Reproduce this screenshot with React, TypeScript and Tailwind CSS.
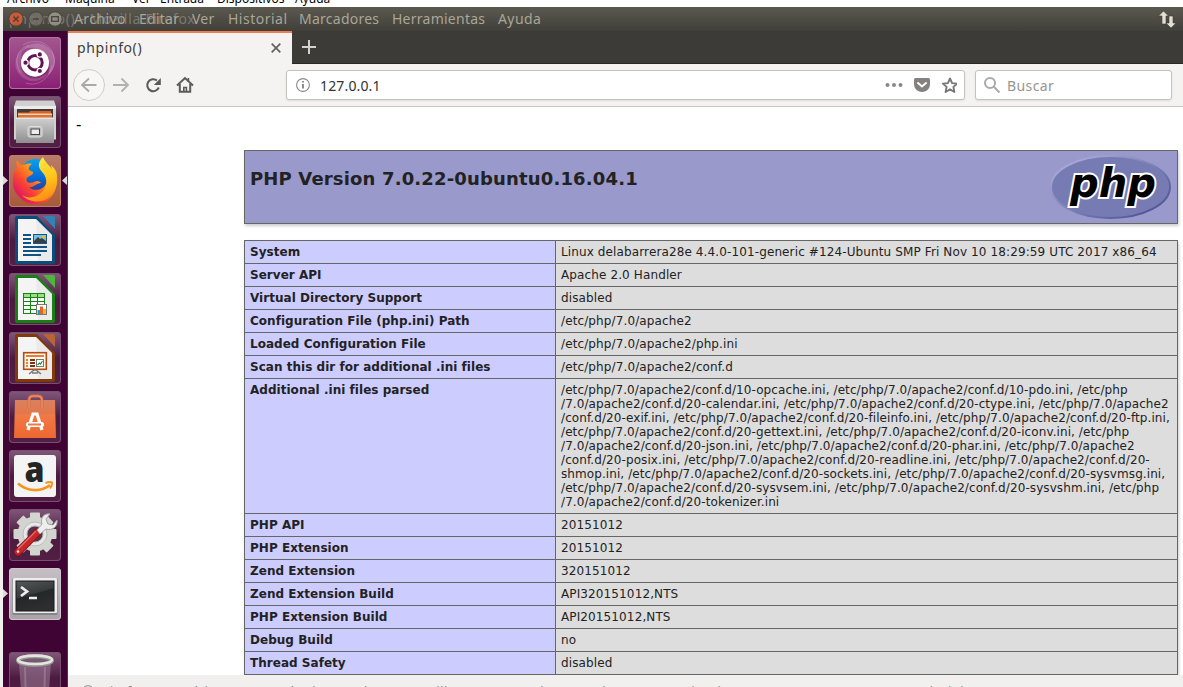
import React from "react";

const uiFont = "font-['Noto_Sans',sans-serif]";

const infoRows: [string, string][] = [
  ["System", "Linux delabarrera28e 4.4.0-101-generic #124-Ubuntu SMP Fri Nov 10 18:29:59 UTC 2017 x86_64"],
  ["Server API", "Apache 2.0 Handler"],
  ["Virtual Directory Support", "disabled"],
  ["Configuration File (php.ini) Path", "/etc/php/7.0/apache2"],
  ["Loaded Configuration File", "/etc/php/7.0/apache2/php.ini"],
  ["Scan this dir for additional .ini files", "/etc/php/7.0/apache2/conf.d"],
  [
    "Additional .ini files parsed",
    `/etc/php/7.0/apache2/conf.d/10-opcache.ini, /etc/php/7.0/apache2/conf.d/10-pdo.ini, /etc/php
/7.0/apache2/conf.d/20-calendar.ini, /etc/php/7.0/apache2/conf.d/20-ctype.ini, /etc/php/7.0/apache2
/conf.d/20-exif.ini, /etc/php/7.0/apache2/conf.d/20-fileinfo.ini, /etc/php/7.0/apache2/conf.d/20-ftp.ini,
/etc/php/7.0/apache2/conf.d/20-gettext.ini, /etc/php/7.0/apache2/conf.d/20-iconv.ini, /etc/php
/7.0/apache2/conf.d/20-json.ini, /etc/php/7.0/apache2/conf.d/20-phar.ini, /etc/php/7.0/apache2
/conf.d/20-posix.ini, /etc/php/7.0/apache2/conf.d/20-readline.ini, /etc/php/7.0/apache2/conf.d/20-
shmop.ini, /etc/php/7.0/apache2/conf.d/20-sockets.ini, /etc/php/7.0/apache2/conf.d/20-sysvmsg.ini,
/etc/php/7.0/apache2/conf.d/20-sysvsem.ini, /etc/php/7.0/apache2/conf.d/20-sysvshm.ini, /etc/php
/7.0/apache2/conf.d/20-tokenizer.ini`,
  ],
  ["PHP API", "20151012"],
  ["PHP Extension", "20151012"],
  ["Zend Extension", "320151012"],
  ["Zend Extension Build", "API320151012,NTS"],
  ["PHP Extension Build", "API20151012,NTS"],
  ["Debug Build", "no"],
  ["Thread Safety", "disabled"],
];

function Tile({ children, className = "" }: { children: React.ReactNode; className?: string }) {
  return (
    <div className={`h-[52px] w-[52px] shrink-0 overflow-hidden rounded-[4px] ${className}`}>
      <svg width="52" height="52" viewBox="0 0 52 52">
        {children}
      </svg>
    </div>
  );
}

const glass = "bg-linear-to-b from-[#81597a] via-[#4c1a40] to-[#532044] shadow-[inset_0_0_0_1px_#76506f]";

function UbuntuIcon() {
  return (
    <Tile className="bg-linear-to-b from-[#a2578f] to-[#8c1d75] shadow-[inset_0_0_0_1px_#b674a6]">
      <g fill="none" stroke="#d5a5cb" strokeOpacity=".4" strokeWidth="1">
        <path d="M14 8C26 1 40 5 44 17c3 8 0 16-4 20" />
        <path d="M12 36C4 25 8 12 20 8" />
        <path d="M17 46C28 50 41 42 43 28" />
      </g>
      <path d="M12 15C22 1 39 5 45 18c3 8-1 16-6 20 4-12 0-24-13-27-7-1-11 1-14 4Z" fill="#fff" opacity=".2" />
      <path d="M39 36C30 49 14 45 8 34c-4-9 0-18 6-22-5 12 0 23 11 26 6 2 11 0 14-2Z" fill="#fff" opacity=".14" />
      <circle cx="26" cy="27" r="14.5" fill="#54104a" opacity=".4" />
      <circle cx="26" cy="25.7" r="14" fill="#fff" />
      <circle cx="26" cy="25.7" r="7.2" fill="none" stroke="#611451" strokeWidth="3" />
      <g stroke="#fff" strokeWidth="1.2" fill="#611451">
        <circle cx="16.5" cy="25.7" r="2.7" />
        <circle cx="30.8" cy="17.4" r="2.7" />
        <circle cx="30.8" cy="34" r="2.7" />
      </g>
    </Tile>
  );
}

function FilesIcon() {
  return (
    <Tile className={glass}>
      <defs>
        <linearGradient id="cab" x2="0" y2="1">
          <stop stopColor="#d0d0d0" />
          <stop offset="1" stopColor="#8f8f8f" />
        </linearGradient>
      </defs>
      <path d="M7 4.5h38l2 6v33H5v-33Z" fill="#d0d0d0" />
      <path d="M5 10h42v3H5Z" fill="#ececec" />
      <path d="M8 13h36v10H8Z" fill="#443b38" />
      <path d="M9 16.5h11l1-1.5h21v7H9Z" fill="#d8612a" />
      <path d="M9 17.5h34v4H9Z" fill="#f6d2ae" />
      <path d="M9 19h34v3H9Z" fill="#df7132" />
      <path d="M7 21.7h38V47H7Z" fill="url(#cab)" />
      <path d="M7 22.2h38" stroke="#efefef" />
      <rect x="19" y="30.5" width="14" height="10.5" rx="2" fill="#bdbdbd" stroke="#e0e0e0" />
      <rect x="22" y="33" width="8.5" height="5.5" fill="#eee" stroke="#444" />
    </Tile>
  );
}

function FirefoxIcon() {
  return (
    <Tile className="bg-linear-to-b from-[#b97d69] to-[#a85a38] shadow-[inset_0_0_0_1px_#bf806a]">
      <defs>
        <linearGradient id="fxBody" x1=".9" y1="0" x2=".15" y2=".8">
          <stop stopColor="#ffe329" />
          <stop offset=".4" stopColor="#ff9b17" />
          <stop offset=".75" stopColor="#fb4432" />
          <stop offset="1" stopColor="#e41c5c" />
        </linearGradient>
        <linearGradient id="fxTail" x1=".3" y1="0" x2=".6" y2="1">
          <stop stopColor="#fff04a" />
          <stop offset=".55" stopColor="#ffc51c" />
          <stop offset="1" stopColor="#ff8a15" />
        </linearGradient>
        <linearGradient id="fxGlobe" x2="0" y2="1">
          <stop stopColor="#04a3ee" />
          <stop offset=".6" stopColor="#0868d4" />
          <stop offset="1" stopColor="#313293" />
        </linearGradient>
      </defs>
      <path d="M6 20C3 38 13 49 26 49s21-9 22-23c0-4-1-8-2-10L38 30 26 36 12 28Z" fill="url(#fxBody)" />
      <ellipse cx="26.5" cy="20.5" rx="15.5" ry="16.5" fill="url(#fxGlobe)" />
      <path d="M8 5c1 3 4 5 6 5 3-1 6-2 9-1-3 2-4 4-3 6l4 2c1 3-5 4-6 6-2 4 2 6 7 4 3-2 6-1 7 1-5 0-7 5-12 4 5 5 14 3 17-3 3-6 2-11-1-15 8 8 8 23-2 30C20 52 3 42 4 26 4 19 6 15 8 12 7 9 7 7 8 5Z" fill="url(#fxBody)" />
      <path d="M34 2c-6 6-5 11 0 16 5 6 4 14-1 19-6 6-14 7-20 3 7 8 21 9 28 1 6-5 8-14 7-20 0-5-3-8-6-11l1 5C42 11 37 9 34 2Z" fill="url(#fxTail)" />
    </Tile>
  );
}

function Document({ dark, light, children }: { dark: string; light: string; children: React.ReactNode }) {
  return (
    <Tile className={glass}>
      <path d="M8 2h20l18 19v27q0 2-2 2H8q-2 0-2-2V4q0-2 2-2Z" fill={dark} />
      <path d="M34 2h10q2 0 2 2v11Z" fill={light} />
      <path d="M9 5h18l16 16v26H9Z" fill="#f4f4f4" />
      <path d="M27 5l16 16v26H29Z" fill="#ddd" opacity=".4" />
      {children}
    </Tile>
  );
}

function WriterIcon() {
  return (
    <Document dark="#0b4c7c" light="#2e83b9">
      <path d="M14 21h8M14 25h8M14 29h8M14 33h24M14 37h24M14 41h18" stroke="#0f5485" strokeWidth="2" />
      <rect x="24.5" y="20.5" width="13" height="9" fill="#73c1e5" stroke="#1c567b" />
      <circle cx="34.5" cy="23" r="1.6" fill="#e9c22f" />
      <path d="M25 29v-2l4-4 2 2 2-1 4 3v2Z" fill="#393f40" />
    </Document>
  );
}

function CalcIcon() {
  return (
    <Document dark="#168015" light="#4bb83b">
      <path d="M14 20h22v21H14Z" fill="#188218" />
      <path d="M15 21h6v3h-6zM22 21h6v3h-6zM29 21h6v3h-6z" fill="#9dde83" />
      <path d="M15 25h6v3h-6zM22 25h6v3h-6zM29 25h6v3h-6zM15 29h6v3h-6zM22 29h6v3h-6zM29 29h6v3h-6zM15 33h6v3h-6zM22 33h6v3h-6zM15 37h6v3h-6zM22 37h6v3h-6z" fill="#f5fbf2" />
      <rect x="27.5" y="31.5" width="10" height="10" fill="#fff" stroke="#777" />
      <path d="M28.5 37H31v4h-2.5Z" fill="#209bd2" />
      <path d="M31 33.5h3V41h-3Z" fill="#e46522" />
      <path d="M34 36h3v5h-3Z" fill="#eeb62b" />
    </Document>
  );
}

function ImpressIcon() {
  return (
    <Document dark="#82390b" light="#b96533">
      <rect x="14.7" y="20.7" width="22.6" height="16.6" fill="#fff8ef" stroke="#b54b13" strokeWidth="1.6" />
      <path d="M17 24h18" stroke="#e87e36" strokeWidth="2" />
      <path d="M17 28h2m0 3h-2m0 3h2" stroke="#e87e36" strokeWidth="2" />
      <path d="M21 28h5m-5 3h5m-5 3h5" stroke="#793414" strokeWidth="2" />
      <rect x="27.5" y="27.5" width="7" height="7" fill="#fff" stroke="#777" />
      <path d="m28.5 33 2-2 1 1 2-3" fill="none" stroke="#26942b" strokeWidth="1.2" />
      <path d="m20 42 5-4h2l5 4m-9-1h6" fill="none" stroke="#777" strokeWidth="1.5" />
    </Document>
  );
}

function SoftwareIcon() {
  return (
    <Tile className={glass}>
      <defs>
        <linearGradient id="bag" x2="0" y2="1">
          <stop stopColor="#d98161" />
          <stop offset=".35" stopColor="#e4774c" />
          <stop offset=".4" stopColor="#f07946" />
          <stop offset="1" stopColor="#ee6830" />
        </linearGradient>
      </defs>
      <path d="M6 9h40l1 38H5Z" fill="url(#bag)" />
      <path d="M20 17V9q0-4 4-4h5q4 0 4 4v8" fill="none" stroke="#d46b43" strokeWidth="3" />
      <path d="M20 17V9q0-4 4-4h5q4 0 4 4v8" fill="none" stroke="#f19a79" strokeWidth="1" />
      <path d="m19 39 5-16h4l5 16" fill="none" stroke="#fff" strokeWidth="3.2" />
      <rect x="17" y="31" width="18" height="5" rx="2.5" fill="#fff" />
      <path d="M19 33.5h13" stroke="#e67a52" strokeWidth="1.8" />
    </Tile>
  );
}

function AmazonIcon() {
  return (
    <Tile className={glass}>
      <rect x="5" y="5" width="42" height="42" rx="3" fill="#f4f4f4" />
      <text x="15.5" y="32" fontFamily="Open Sans, sans-serif" fontWeight="800" fontSize="36" textLength="20" lengthAdjust="spacingAndGlyphs" fill="#252525">a</text>
      <path d="M9 33.5c9 8 23 9 32 1.5" fill="none" stroke="#f5951b" strokeWidth="2.6" />
      <path d="M36.5 33c3-1 5-1.2 6.5-.5.3 1.8-.4 4-2 6" fill="none" stroke="#f5951b" strokeWidth="2" />
    </Tile>
  );
}

function SettingsIcon() {
  return (
    <Tile className={glass}>
      <g fill="#d2d4d0">
        {[0, 45, 90, 135].map((a) => (
          <rect key={a} x="21" y="3.5" width="10" height="43" rx="1" transform={`rotate(${a} 26 25)`} />
        ))}
        <circle cx="26" cy="25" r="17.5" />
      </g>
      <circle cx="26" cy="25" r="12" fill="#e8e9e6" stroke="#b9bcb7" />
      <circle cx="26" cy="25" r="8" fill="#592f4d" stroke="#aaa" />
      <path d="m9 43 20-20" stroke="#8c1515" strokeWidth="7.8" strokeLinecap="round" />
      <path d="m9 43 20-20" stroke="#c5272a" strokeWidth="6" strokeLinecap="round" />
      <path d="m9 40 18-18" stroke="#ec6868" strokeWidth="1.2" />
      <circle cx="9" cy="42.5" r="1.3" fill="#f7dddd" />
      <path d="m28 21 5-6c-2-6 2-11 8-10l-4 5 2 5 5 1 4-5c1 7-5 11-11 9l-6 5Z" fill="#eee" stroke="#a4a4a4" />
    </Tile>
  );
}

function TerminalIcon() {
  return (
    <Tile className="bg-linear-to-b from-[#c5bfc3] to-[#aaa2a8] shadow-[inset_0_0_0_1px_#cbc4c9]">
      <defs>
        <linearGradient id="term" x2=".35" y2="1">
          <stop stopColor="#55585a" />
          <stop offset=".5" stopColor="#393c3d" />
          <stop offset=".55" stopColor="#242727" />
          <stop offset="1" stopColor="#2c2e2f" />
        </linearGradient>
      </defs>
      <rect x="3.5" y="10" width="45" height="37" rx="1" fill="#84848a" />
      <rect x="4" y="10" width="44" height="35" rx="1" fill="#ededed" />
      <rect x="7" y="13" width="38" height="30" fill="url(#term)" stroke="#191919" />
      <path d="m12 19 6 4.5-6 4.5" fill="none" stroke="#eee" strokeWidth="2.7" />
      <path d="M20 30h8" stroke="#eee" strokeWidth="2.4" />
    </Tile>
  );
}

function TrashIcon() {
  return (
    <Tile className={glass}>
      <path d="m10 11 3 42h26l3-42Z" fill="#94738d" opacity=".65" />
      <path d="M16 15l1 40M36 15l-1 40" stroke="#b79bb1" strokeWidth="2" opacity=".4" />
      <ellipse cx="26" cy="8.5" rx="17" ry="4.2" fill="#765a70" stroke="#989b96" strokeWidth="4" />
      <ellipse cx="26" cy="7.8" rx="17" ry="4.2" fill="none" stroke="#e4e5df" strokeWidth="2.6" />
    </Tile>
  );
}

function Launcher() {
  return (
    <aside className="relative flex h-[656px] w-[65px] shrink-0 flex-col gap-[7px] overflow-hidden border-r border-[#5e2b52] bg-[#3f0433] pt-[6px] pl-[6px]">
      <UbuntuIcon />
      <FilesIcon />
      <FirefoxIcon />
      <WriterIcon />
      <CalcIcon />
      <ImpressIcon />
      <SoftwareIcon />
      <AmazonIcon />
      <SettingsIcon />
      <TerminalIcon />
      <div className="h-[18px] shrink-0" />
      <TrashIcon />
      <svg className="absolute top-[145px] left-0" width="5" height="9"><path d="M0 0l5 4.5L0 9Z" fill="#ddd9db" /></svg>
      <svg className="absolute top-[145px] left-[59px]" width="5" height="9"><path d="M5 0L0 4.5 5 9Z" fill="#ddd9db" /></svg>
      <svg className="absolute top-[558px] left-0" width="5" height="9"><path d="M0 0l5 4.5L0 9Z" fill="#ddd9db" /></svg>
    </aside>
  );
}

function MenuBar() {
  return (
    <div className={`relative ml-[3px] flex h-6 shrink-0 items-center bg-linear-to-b from-[#5b594f] to-[#403f3a] pl-[71px] text-[14px] leading-6 tracking-[0.25px] whitespace-nowrap text-[#a9a698] ${uiFont}`}>
      <span className="absolute top-0 left-[6px] tracking-[0.75px] text-[#7b7970]">phpinfo() - Mozilla Firefox</span>
      <svg className="absolute top-[4px] left-[5px]" width="56" height="16" viewBox="0 0 56 16">
        <g stroke="#45433d">
          <circle cx="8" cy="8" r="7.2" fill="#d95b36" fillOpacity=".85" />
          <circle cx="28" cy="8" r="7.2" fill="#77746b" fillOpacity=".75" />
          <circle cx="47" cy="8" r="7.2" fill="#9b988d" fillOpacity=".85" />
        </g>
        <path d="m5.5 5.5 5 5m0-5-5 5M25 8h6" stroke="#4c3c34" strokeWidth="1.4" />
        <rect x="43.7" y="5.7" width="6.6" height="4.6" fill="none" stroke="#464540" strokeWidth="1.3" />
      </svg>
      <span className="relative w-[65px] tracking-[0.4px]">Archivo</span>
      <span className="relative w-[53px]">Editar</span>
      <span className="relative w-[36px]">Ver</span>
      <span className="w-[71px] tracking-[0.5px]">Historial</span>
      <span className="w-[93px]">Marcadores</span>
      <span className="w-[106px]">Herramientas</span>
      <span className="tracking-[0.4px]">Ayuda</span>
      <svg className="absolute top-[4px] right-[7px]" width="18" height="18" viewBox="0 0 18 18">
        <path d="M5.5 0 10.5 5H8v8H4V5H0.5ZM11 5h4v7h3l-5 5-5-5h3Z" fill="#e3dfd5" stroke="#3e3c36" strokeWidth=".6" />
      </svg>
    </div>
  );
}

function Toolbar() {
  return (
    <div className={`flex h-[43px] shrink-0 items-center border-b border-[#cac8c5] bg-[#f4f3f1] ${uiFont}`}>
      <svg width="132" height="42" viewBox="0 0 132 42" className="shrink-0" fill="none">
        <circle cx="21" cy="21" r="15.5" fill="#f8f7f6" stroke="#cecccb" />
        <path d="M28.5 21H14m7-6.5L14 21l7 6.5" stroke="#aaa9a7" strokeWidth="1.8" />
        <path d="M45 21h15m-6.5-6.5 6.5 6.5-6.5 6.5" stroke="#b2b1af" strokeWidth="1.8" />
        <path d="M90.8 23.5A6 6 0 1 1 89 16.5" stroke="#5b5a57" strokeWidth="2" />
        <path d="M92.8 14v7h-7Z" fill="#5b5a57" />
        <path d="M109 21.5 117 14l8 7.5M111.8 20v7.7h10.4V20" stroke="#5b5a57" strokeWidth="2" />
        <path d="M115.8 28v-4.5h2.6v4.5m2-14v3" stroke="#5b5a57" strokeWidth="1.6" />
      </svg>
      <div className="ml-[86px] flex h-[30px] w-[679px] shrink-0 items-center rounded-[3px] border border-[#c5c2be] bg-white text-[14px] shadow-[0_1px_2px_#ddd]">
        <svg width="33" height="28" viewBox="0 0 33 28" fill="none">
          <circle cx="16" cy="14" r="6.4" stroke="#8d8b89" strokeWidth="1.1" />
          <path d="M16 13v4.5M16 10v1.6" stroke="#73716f" strokeWidth="1.6" />
        </svg>
        <span className="tracking-[0.15px] text-[#333]">127.0.0.1</span>
        <svg width="78" height="28" viewBox="0 0 78 28" className="ml-auto" fill="none">
          <g fill="#888"><circle cx="8.5" cy="14" r="2" /><circle cx="15" cy="14" r="2" /><circle cx="21.5" cy="14" r="2" /></g>
          <path d="M36.5 7h13q1.500 0 1.500 1.500V13c0 10.500-16 10.500-16 0V8.500Q35 7 36.500 7Z" fill="#838281" />
          <path d="m39 12 4 3.500 4-3.500" stroke="#fff" strokeWidth="2" strokeLinecap="round" />
          <path d="m71 7.500 2.100 4.600 5 .5-3.700 3.300 1 5.100-4.400-2.600-4.400 2.600 1-5.100-3.700-3.300 5-.5Z" stroke="#777" strokeWidth="1.900" strokeLinejoin="round" />
        </svg>
        <span className="w-[7px]" />
      </div>
      <div className="ml-[10px] flex h-[30px] w-[197px] shrink-0 items-center rounded-[3px] border border-[#c5c2be] bg-white text-[14px] shadow-[0_1px_2px_#ddd]">
        <svg width="31" height="28" viewBox="0 0 31 28" fill="none" stroke="#aaa9a8" strokeWidth="2">
          <circle cx="14" cy="12" r="5" />
          <path d="m17.5 15.5 6 6" />
        </svg>
        <span className="tracking-[0.4px] text-[#969593]">Buscar</span>
      </div>
    </div>
  );
}

function PhpLogo() {
  return (
    <svg width="122" height="68" viewBox="0 0 122 68" className="mt-[2px] mr-[5px] shrink-0">
      <defs>
        <linearGradient id="phpRim" x2="1" y2="1">
          <stop stopColor="#b5b7e0" />
          <stop offset=".45" stopColor="#8487ba" />
          <stop offset="1" stopColor="#45458b" />
        </linearGradient>
      </defs>
      <ellipse cx="60.5" cy="34" rx="59.5" ry="31" fill="#777bb3" stroke="url(#phpRim)" strokeWidth="2" />
      <text x="20" y="44" fontFamily="DejaVu Sans, sans-serif" fontWeight="bold" fontStyle="italic" fontSize="41" textLength="86" lengthAdjust="spacingAndGlyphs" fill="#000" stroke="#fff" strokeWidth="4" paintOrder="stroke">php</text>
    </svg>
  );
}

export default function App() {
  return (
    <div className="flex h-[687px] w-[1183px] flex-col overflow-hidden bg-[#f1f0ef]">
      <div className={`flex h-[7px] shrink-0 items-end overflow-hidden bg-white text-[12px] whitespace-nowrap text-black ${uiFont}`}>
        <div className="flex h-[17px] items-center pl-[7px] leading-[17px]">
          <span className="w-[58px]">Archivo</span>
          <span className="w-[67px]">Máquina</span>
          <span className="w-[28px]">Ver</span>
          <span className="w-[57px]">Entrada</span>
          <span className="w-[78px]">Dispositivos</span>
          <span>Ayuda</span>
        </div>
      </div>
      <MenuBar />
      <div className="flex h-[656px] shrink-0 pl-[3px]">
        <Launcher />
        <main className="flex min-w-0 grow flex-col bg-white">
          <div className={`flex h-[33px] shrink-0 border-b border-[#292824] bg-[#3c3b37] ${uiFont}`}>
            <div className="mb-[-1px] flex w-[224px] items-center border-t-2 border-[#ee7c4f] bg-[#f4f3f1] pb-[2px] pl-[9px] text-[14px] text-[#3d3d3d]">
              <span className="tracking-[0.6px]">phpinfo()</span>
              <svg className="mr-[11px] ml-auto" width="10" height="10" viewBox="0 0 10 10"><path d="m.7.7 8.6 8.6m0-8.6L.7 9.3" stroke="#62615e" strokeWidth="1.7" /></svg>
            </div>
            <svg className="mt-[9px] ml-[10px]" width="14" height="14" viewBox="0 0 14 14"><path d="M7 0v14M0 7h14" stroke="#d4d1ca" strokeWidth="2" /></svg>
          </div>
          <Toolbar />
          <div className="flex h-[568px] shrink-0 flex-col overflow-hidden pl-[176px] font-['DejaVu_Sans',sans-serif] text-[12px] leading-[14px] text-[#222]">
            <div className="-ml-[168px] h-[43px] shrink-0 pt-[11px] text-[15px] text-black">-</div>
            <div className="flex h-[74px] w-[934px] shrink-0 justify-between border border-[#666] bg-[#9999cc] pl-[5px] shadow-[1px_2px_3px_#ccc]">
              <h1 className="pt-[17px] text-[18px] leading-[21px] font-bold tracking-[0.16px] whitespace-nowrap">PHP Version 7.0.22-0ubuntu0.16.04.1</h1>
              <PhpLogo />
            </div>
            <div className="mt-4 w-[934px] shrink-0 border-t border-[#666] shadow-[1px_2px_3px_#ccc]">
              {infoRows.map(([k, v]) => (
                <div key={k} className="flex border-b border-[#666] whitespace-pre">
                  <div className="w-[311px] shrink-0 border-l border-[#666] bg-[#ccccff] px-[5px] py-1 font-bold tracking-[0.03px]">{k}</div>
                  <div className={`grow border-x border-[#666] bg-[#dddddd] px-[5px] py-1 ${v.includes("\n") ? "tracking-[0.085px]" : "tracking-[0.12px]"}`}>{v}</div>
                </div>
              ))}
            </div>
          </div>
          <div className={`flex h-[12px] shrink-0 items-start overflow-hidden bg-[#f1f0ee] text-[13px] leading-5 whitespace-nowrap text-[#888] ${uiFont}`}>
            <svg className="mt-[10px] ml-[13px] shrink-0" width="14" height="14" viewBox="0 0 14 14"><circle cx="7" cy="7" r="6.3" fill="none" stroke="#888" /></svg>
            <span className="mt-[6px] ml-[8px] tracking-[0.3px]">Firefox automáticamente envía algunos datos a Mozilla para que podamos mejorar su experiencia.</span>
            <span className="mt-[6px] mr-[122px] ml-auto">Elegir lo que comparto</span>
          </div>
        </main>
      </div>
    </div>
  );
}
